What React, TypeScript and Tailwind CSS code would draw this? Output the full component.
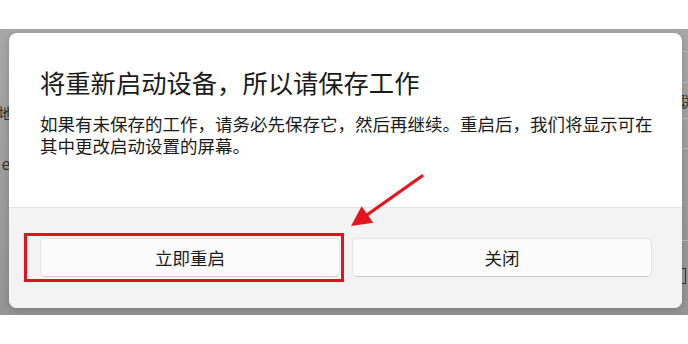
import React from 'react';

const font = { fontFamily: '"Noto Sans CJK SC", "Noto Sans", sans-serif' };

// faint page behind the dim layer, only the slivers next to the dialog show
const SideStrip = ({ side }: { side: 'left' | 'right' }) => (
  <div className={`shrink-0 flex flex-col overflow-hidden text-[15px] leading-[20px] text-[#2f2f2f] ${side === 'left' ? 'w-[9px] items-end' : 'w-[6px] items-start'}`}>
    {side === 'left' ? (
      <>
        <div className="h-[27px] border-b border-[#b3b3b3]" />
        <div className="mt-[43px] mr-[-4px]">地</div>
        <div className="mt-[31px] mr-[-1px]">e</div>
      </>
    ) : (
      <>
        <div className="w-full h-[19px] border-b border-[#b3b3b3]" />
        <div className="w-full h-[31px] border-b border-[#b3b3b3]" />
        <div className="ml-[-4px] mt-[8px]">联</div>
        <div className="w-full h-[8px] border-b border-[#b3b3b3]" />
        <div className="w-full h-[30px] border-b border-[#b3b3b3]" />
        <div className="w-full h-[92px] border-b border-[#b3b3b3]" />
        <div className="ml-[-3px] mt-[27px] w-[7px] h-[16px] border border-[#2f2f2f]" />
      </>
    )}
  </div>
);

const Button = ({ label }: { label: string }) => (
  <button className="w-[300px] h-[39px] rounded-[5px] bg-[#fbfbfb] border border-[#e3e3e3] border-b-[#cdcdcd] text-[17.5px] leading-[24px] text-[#1b1b1b]">
    {label}
  </button>
);

export default function App() {
  return (
    <div className="relative w-[688px] h-[344px] bg-white flex flex-col overflow-hidden" style={font}>
      <div className="h-[29px] shrink-0" />
      <div className="h-[286px] shrink-0 bg-linear-to-b from-[#a8a8a8] to-[#959595] pt-[4px] flex">
        <SideStrip side="left" />
        <div className="w-[673px] h-[275px] bg-white rounded-[8px] flex flex-col overflow-hidden shadow-[0_2px_8px_rgba(0,0,0,0.18)]">
          <div className="h-[174px] shrink-0 pl-[31px] pr-[20px] pt-[33px]">
            <h1 className="text-[25.3px] leading-[32px] text-[#1a1a1a] font-normal">将重新启动设备，所以请保存工作</h1>
            <p className="mt-[15px] text-[17.5px] leading-[22px] text-[#1b1b1b]">
              如果有未保存的工作，请务必先保存它，然后再继续。重启后，我们将显示可在其中更改启动设置的屏幕。
            </p>
          </div>
          <div className="flex-1 bg-[#f3f3f3] border-t border-[#e5e5e5] flex gap-[12px] pl-[31px] pt-[30px]">
            <Button label="立即重启" />
            <Button label="关闭" />
          </div>
        </div>
        <SideStrip side="right" />
      </div>

      {/* annotation overlay */}
      <div className="absolute left-[24px] top-[233px] w-[320px] h-[49px] border-[3px] border-[#e0141e]" />
      <svg className="absolute left-0 top-0 pointer-events-none" width="688" height="344">
        <line x1="422" y1="176" x2="364" y2="217" stroke="#e8141c" strokeWidth="3.2" strokeLinecap="round" />
        <polygon points="351,226 361.6,206.3 373.2,222.7" fill="#e8141c" />
      </svg>
    </div>
  );
}
